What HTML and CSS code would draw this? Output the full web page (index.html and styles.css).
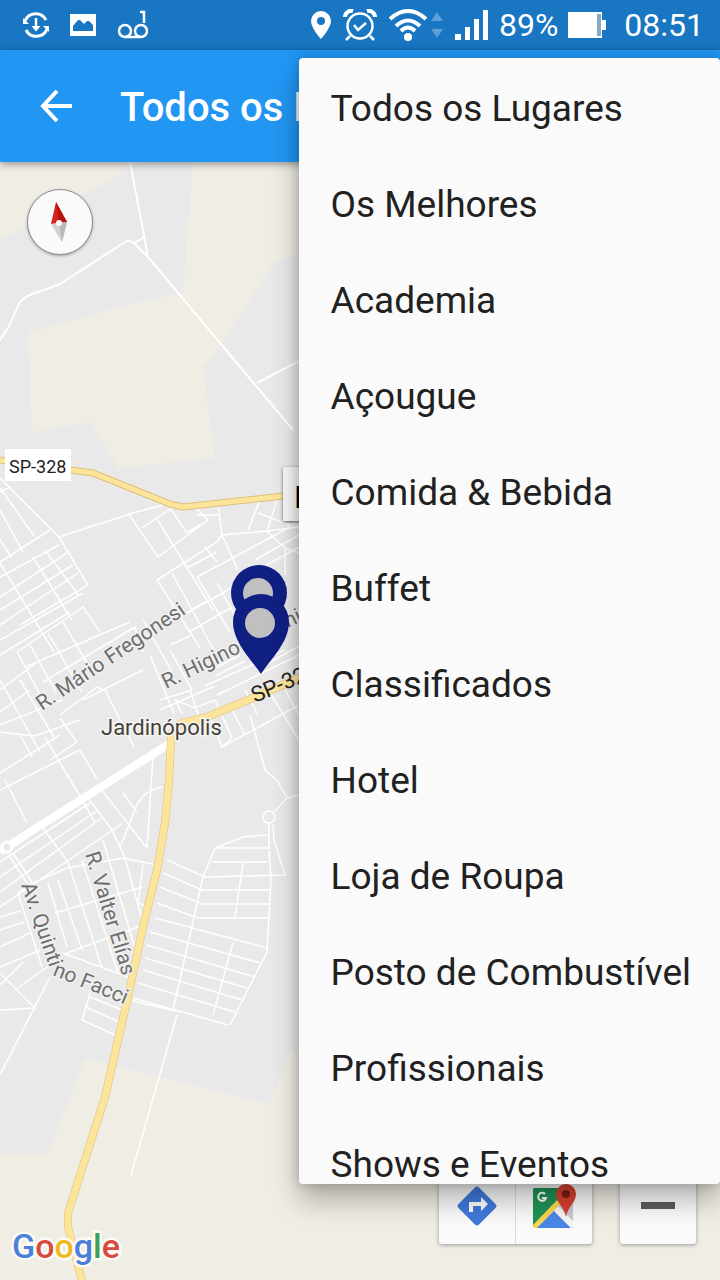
FILE: index.html
```html
<!DOCTYPE html>
<html lang="pt-BR">
<head>
  <meta charset="UTF-8">
  <meta name="viewport" content="width=device-width, initial-scale=1">
  <title>Todos os Lugares</title>
  <link rel="stylesheet" href="styles.css">
</head>
<body>

  <div class="status-bar">
    <div class="notificacoes">
      <svg width="26" height="26" viewBox="0 0 26 26" fill="none" stroke="#fff" stroke-width="3">
        <path d="M2 9A11.500 11.500 0 0 1 23 8M24 17A11.500 11.500 0 0 1 3 18"/>
        <path d="M13 6v9" stroke-width="2.500"/>
        <path d="M8.500 14h9L13 19.500zM0 6v6h6zM26 20v-6h-6z" fill="#fff" stroke="none"/>
      </svg>
      <svg width="26" height="22" viewBox="0 0 26 22">
        <path fill="#fff" fill-rule="evenodd" d="M0 0h26v22H0zM3 17h20v-6l-4-4h-2l-3 3-4-4H8l-5 6z"/>
      </svg>
      <svg width="32" height="30" viewBox="0 0 32 30" fill="none" stroke="#fff" stroke-width="2.500">
        <circle cx="8" cy="21" r="6"/>
        <circle cx="24" cy="21" r="6"/>
        <path d="M8 27h16M23 2h4v11"/>
      </svg>
    </div>
    <div class="sistema">
      <div class="indicadores">
        <svg width="20" height="28" viewBox="0 0 20 28">
          <path fill="#fff" fill-rule="evenodd" d="M10 0A10 10 0 0 0 0 10c0 7 10 18 10 18s10-11 10-18A10 10 0 0 0 10 0zm0 6a4 4 0 1 1 0 8 4 4 0 0 1 0-8z"/>
        </svg>
        <svg width="34" height="32" viewBox="0 0 34 32" fill="none" stroke="#fff" stroke-width="2.500">
          <circle cx="17" cy="17" r="12.500"/>
          <path d="M11 16l4 5 8-7M7 27l-4 4M27 27l4 4"/>
          <path d="M2 8c0-4 4-7 8-6M32 8c0-4-4-7-8-6" stroke-width="4"/>
        </svg>
        <svg width="54" height="32" viewBox="0 0 54 32" fill="none" stroke="#fff" stroke-width="4">
          <path d="M1 10Q19-6 37 10M7 17Q19 6 31 17M12 22Q19 15 26 22"/>
          <circle cx="19" cy="28" r="4" fill="#fff" stroke="none"/>
          <path d="M42 12h12l-6-9zM42 20h12l-6 9z" fill="#5c9fd6" stroke="none"/>
        </svg>
        <svg width="34" height="30" viewBox="0 0 34 30" fill="#fff">
          <path d="M0 24h6v6H0zM10 17h5v13h-5zM19 9h5v21h-5zM28 0h5v30h-5z"/>
        </svg>
      </div>
      <span>89%</span>
      <svg width="38" height="26" viewBox="0 0 38 26">
        <path fill="#fff" d="M0 0h34v8h4v10h-4v8H0z"/>
        <path fill="#86a9c4" d="M29 2h4v22h-4z"/>
      </svg>
      <span class="hora">08:51</span>
    </div>
  </div>

  <header class="barra">
    <button class="voltar" type="button" aria-label="Voltar">
      <svg width="32" height="32" viewBox="0 0 32 32" fill="none" stroke="#fff" stroke-width="4">
        <path d="M17 1L3 16l14 15M2 16h30"/>
      </svg>
    </button>
    <h1>Todos os Lugares</h1>
  </header>

  <main class="mapa">
    <svg class="ruas" viewBox="0 162 720 1118" preserveAspectRatio="xMinYMin slice">
      <rect x="0" y="162" width="720" height="1118" fill="#e9e9e9"/>

      <!-- areas rurais -->
      <g fill="#efede4">
        <path d="M0 162H140L88 193 20 230 0 240z"/>
        <path d="M193 162H720V255H299L287 257 273 263 227 337 203 367 215 458 118 468 90 422 32 432 28 333 133 303 183 293z"/>
        <path d="M0 1154H48L85 1058 270 1104 290 1050H720V1280H0z"/>
      </g>

      <!-- ruas pequenas -->
      <g fill="none" stroke="#fff" stroke-width="1.500">
        <path d="M0 478L59 537 88 585 20 625M59 537L133 513 163 505M128 513L158 557 208 520 195 507M142 528L172 508M157 519L213 610M170 508L187 533 200 525"/>
        <path d="M218 505L222 535 238 570M222 535L267 531 299 527M260 500L248 530M277 500L267 531 285 548 300 553M258 513L290 525M285 548V575M197 577L290 527M157 580L217 542 222 535M197 515H218"/>
        <path d="M157 580L200 648M172 573L222 665M205 547L217 562M197 577L230 632M217 583L240 625M180 617L233 587M187 568L217 552M189 632L232 607M180 617L205 602"/>
        <path d="M0 562L50 530M0 577L59 545M0 597L67 553M0 610L73 565M0 625L78 573M0 488L35 537M0 510L23 552M0 540L12 558M0 492L10 487M0 563L54 652M33 557L72 620M45 550L79 596"/>
        <path d="M0 640L83 593M0 655L70 612M17 652L83 607 100 632M17 652L43 700M25 667L130 622M30 645L56 692M48 633L82 692M63 622L88 665M43 682L135 627 143 652M0 690L40 660M0 712L30 690"/>
        <path d="M83 700L143 670M60 715L97 687 105 690 134 747M0 725L62 700M0 732L35 736 80 720M45 737L95 822M20 735L32 757M60 718L77 742 50 760M0 773L60 735M0 790L80 750 97 779M0 680L40 752M20 680L55 739"/>
        <path d="M143 620L172 672M160 700L192 690M170 645L190 636M150 655L174 714M160 710L215 686M190 690L200 720M205 686L285 650M212 670L240 655M215 700L232 738 222 747M217 695L299 655M215 676L245 661M209 714L222 747 299 705M250 715L265 770 277 780M232 710L245 735M270 693L299 740"/>
        <path d="M182 714L175 700 195 708 215 700M192 690L170 650M255 560L299 535M240 580L299 547M265 665L299 646M245 690L258 715M285 690L299 715"/>
        <path d="M0 862L90 803M0 877L98 810M0 892L103 817M0 907L123 823M33 883L67 868 123 858 157 865M0 917L20 911M0 930L25 922M55 913L142 887M0 947L30 933M67 953L143 925M0 967L40 950M63 953L128 977M5 780L27 823"/>
        <path d="M43 828L68 862 102 968M48 883L67 947M58 880L82 950M82 860L118 973M103 840L134 945M88 798L112 830 125 858 143 923M100 788L147 848 153 755M163 787Q140 790 133 815L120 847M143 865L138 903 147 906M123 793L137 812"/>
        <path d="M13 853L32 882 18 893 42 967M10 857L27 883M0 985L23 962M0 973L35 1008 0 1010M15 990L50 965M50 977L0 1075M90 993L82 1020 115 1035M86 1007L119 1022M90 997L122 1010"/>
        <path d="M167 860L205 877M163 873L202 890M160 887L200 903M157 903L198 918M155 918L267 948M150 932L260 963M147 945L255 977M145 958L247 988M143 970L242 1000M138 983L235 1012M133 998L228 1025M133 1001L180 1012"/>
        <path d="M215 848L203 877 173 1010M215 848H269V824M215 848L243 837 267 835M269 850L271 880 267 952 230 1025M273 824L274 840 285 875 203 877M212 862H267M202 890H271M200 904H270M198 918H270M243 863L235 917M233 943L213 1015M277 780L287 798 299 795M287 798L274 812"/>
        <path d="M177 1015L131 1175"/>
        <circle cx="269" cy="817" r="6"/>
      </g>
      <g fill="none" stroke="#fff" stroke-width="2">
        <path d="M130 162L148 257M0 340L8 328 20 302 27 296 60 284 125 242Q130 239 135 244L148 257 293 430M135 242Q144 240 144 233M257 383L299 361"/>
      </g>
      <path d="M172 742L8 846 0 852" fill="none" stroke="#fff" stroke-width="8"/>
      <circle cx="7" cy="847" r="5" fill="#e9e9e9" stroke="#fff" stroke-width="3"/>

      <!-- rodovias -->
      <g fill="none" stroke-linejoin="round">
        <g stroke="#dcc07a" stroke-width="7">
          <path d="M0 460L70 470 93 473 170 504 183 507 310 493"/>
          <path d="M310 673L253 698 207 717 187 722Q172 724 171 740L169 780 165 823 157 870 143 927 128 997 118 1040 105 1097 68 1213V1227L83 1285" stroke-width="8"/>
        </g>
        <g stroke="#fde49b" stroke-width="5">
          <path d="M0 460L70 470 93 473 170 504 183 507 310 493"/>
          <path d="M310 673L253 698 207 717 187 722Q172 724 171 740L169 780 165 823 157 870 143 927 128 997 118 1040 105 1097 68 1213V1227L83 1285" stroke-width="7"/>
        </g>
      </g>

      <!-- nomes -->
      <g class="nome-rua">
        <text transform="translate(42 711) rotate(-34)">R. Mário Fregonesi</text>
        <text transform="translate(166 689) rotate(-26)">R. Higino</text>
        <text transform="translate(288 628) rotate(-26)">ni</text>
        <text transform="translate(85 854) rotate(73)">R. Valter Elías</text>
        <text transform="translate(21 885) rotate(71)">Av. Quinti</text>
        <text transform="translate(52 975) rotate(22)">no Facci</text>
      </g>
      <text class="rodovia" transform="translate(255 703) rotate(-23)">SP-328</text>
      <text class="cidade" x="101" y="735">Jardinópolis</text>
      <rect x="5" y="449" width="66" height="32" fill="#fff"/>
      <text class="placa" x="9" y="473">SP-328</text>

      <!-- marcadores -->
      <g fill="#101f82">
        <circle cx="259" cy="593" r="28"/>
        <circle cx="258" cy="593" r="15" fill="#c0c0c0"/>
        <path d="M261 594a28 28 0 0 0-28 28c0 20 18 37 28 52 10-15 28-32 28-52a28 28 0 0 0-28-28z"/>
        <circle cx="260" cy="623" r="15" fill="#c0c0c0"/>
      </g>
    </svg>

    <button class="bussola" type="button" aria-label="Norte">
      <svg width="20" height="40" viewBox="0 0 20 40">
        <path fill="#d8201e" d="M6 0l11 20-8 1-8 1z"/>
        <path fill="#b5140f" d="M6 0l11 20-8 1z"/>
        <path fill="#d2d2d2" d="M1 22l16-2-5 20z"/>
        <path fill="#b9b9b9" d="M9 21l8-1-5 20z"/>
        <circle cx="9" cy="21" r="3" fill="#fff"/>
      </svg>
    </button>

    <div class="balao">L</div>

    <div class="google"><span class="azul">G</span><span class="vermelho">o</span><span class="amarelo">o</span><span class="azul">g</span><span class="verde">l</span><span class="vermelho">e</span></div>

    <div class="controles">
      <div class="grupo">
        <button type="button" aria-label="Rotas">
          <svg width="40" height="40" viewBox="0 0 40 40">
            <path fill="#4079db" d="M18 1.500q2-2 4 0L38.500 18q2 2 0 4L22 38.500q-2 2-4 0L1.500 22q-2-2 0-4z"/>
            <path fill="#fff" d="M12 26V16h12v-5l7 7-7 7v-5h-8v6z"/>
          </svg>
        </button>
        <button type="button" aria-label="Google Maps">
          <svg width="44" height="44" viewBox="0 0 44 44">
            <rect x="1" y="4" width="40" height="40" rx="2" fill="#c9c9cf"/>
            <path fill="#1f9254" d="M3 4h30L22 24 1 42V6q0-2 2-2z"/>
            <path fill="#fbd74b" d="M25 16l3 4L5 44H2l-1-3z"/>
            <path fill="#4a86e8" d="M22 27L39 44H5z"/>
            <path fill="#f5f5f5" d="M22 27l4-5 15 15v5l-2 2z"/>
            <path fill="none" stroke="#fff" stroke-width="2" d="M13 10a4 4 0 1 0 1 4h-4"/>
            <path fill="#d6402f" d="M34 0a10 10 0 0 0-10 10c0 9 8 12 10 23 2-11 10-14 10-23A10 10 0 0 0 34 0z"/>
            <circle cx="34" cy="10" r="4" fill="#7d1a17"/>
          </svg>
        </button>
      </div>
      <div class="grupo">
        <button type="button" aria-label="Diminuir zoom">
          <svg width="34" height="8"><rect width="34" height="7" fill="#5c5c5c"/></svg>
        </button>
      </div>
    </div>
  </main>

  <ul class="menu" role="menu">
    <li><button type="button" role="menuitem">Todos os Lugares</button></li>
    <li><button type="button" role="menuitem">Os Melhores</button></li>
    <li><button type="button" role="menuitem">Academia</button></li>
    <li><button type="button" role="menuitem">Açougue</button></li>
    <li><button type="button" role="menuitem">Comida &amp; Bebida</button></li>
    <li><button type="button" role="menuitem">Buffet</button></li>
    <li><button type="button" role="menuitem">Classificados</button></li>
    <li><button type="button" role="menuitem">Hotel</button></li>
    <li><button type="button" role="menuitem">Loja de Roupa</button></li>
    <li><button type="button" role="menuitem">Posto de Combustível</button></li>
    <li><button type="button" role="menuitem">Profissionais</button></li>
    <li><button type="button" role="menuitem">Shows e Eventos</button></li>
  </ul>

</body>
</html>
```
FILE: styles.css
```css
* {
  box-sizing: border-box;
}
body {
  margin: 0;
  min-height: 100vh;
  display: flex;
  flex-direction: column;
  position: relative;
  overflow: hidden;
  font-family: Roboto, "Liberation Sans", sans-serif;
}
button {
  display: flex;
  align-items: center;
  justify-content: center;
  padding: 0;
  border: none;
  background: none;
  font: inherit;
  cursor: pointer;
}
svg {
  display: block;
  flex: none;
}

/* barra de status */
.status-bar {
  display: flex;
  align-items: center;
  justify-content: space-between;
  height: 50px;
  padding: 0 16px 0 23px;
  background-color: #1976c2;
  color: #fff;
  font-size: 32px;
}
.notificacoes {
  display: flex;
  align-items: center;
  gap: 21px;
}
.sistema {
  display: flex;
  align-items: center;
  gap: 10px;
}
.indicadores {
  display: flex;
  align-items: center;
  gap: 12px;
}
.sistema span {
  line-height: 50px;
}
.hora {
  margin-left: 8px;
}

.barra {
  display: flex;
  align-items: center;
  height: 112px;
  padding: 0 40px;
  gap: 48px;
  background-color: #2196f3;
  box-shadow: 0 2px 8px rgba(0, 0, 0, 0.4);
  color: #fff;
  z-index: 1;
}
.barra h1 {
  margin: 0;
  padding-top: 4px;
  font-size: 40px;
  font-weight: 500;
  line-height: 48px;
  white-space: nowrap;
}

/* mapa */
.mapa {
  flex: 1;
  position: relative;
  background-color: #efede4;
}
.ruas {
  position: absolute;
  width: 100%;
  height: 100%;
}
.nome-rua {
  font-size: 21px;
  fill: #6e6e6e;
  stroke: #f0f0f0;
  stroke-width: 3px;
  paint-order: stroke;
}
.rodovia {
  font-size: 22px;
  fill: #222;
}
.cidade {
  font-size: 22px;
  fill: #443f38;
  stroke: #f4f4f4;
  stroke-width: 3px;
  paint-order: stroke;
}
.placa {
  font-size: 18px;
  fill: #222;
}
.bussola {
  position: absolute;
  top: 27px;
  left: 27px;
  width: 66px;
  height: 66px;
  border: 1px solid #8c8c8c;
  border-radius: 50%;
  background-color: #fafafa;
  box-shadow: 0 1px 3px rgba(0, 0, 0, 0.3);
}
.balao {
  position: absolute;
  top: 305px;
  left: 283px;
  width: 120px;
  height: 54px;
  padding-left: 11px;
  background-color: #f7f7f7;
  box-shadow: 0 1px 3px rgba(0, 0, 0, 0.6);
  color: #000;
  font-size: 32px;
  line-height: 60px;
}
.google {
  position: absolute;
  left: 12px;
  bottom: 12px;
  font-size: 34px;
  font-weight: 500;
  line-height: 44px;
  -webkit-text-stroke: 5px #fbfaf5;
  paint-order: stroke;
}
.azul {
  color: #4a80d9;
}
.vermelho {
  color: #d64b40;
}
.amarelo {
  color: #f0b91f;
}
.verde {
  color: #3fa158;
}
.controles {
  position: absolute;
  right: 24px;
  bottom: 36px;
  display: flex;
  gap: 28px;
}
.grupo {
  display: flex;
  border-radius: 3px;
  background-color: #fafafa;
  box-shadow: 0 1px 4px rgba(0, 0, 0, 0.35);
}
.grupo button {
  width: 76px;
  height: 76px;
}
.grupo button + button {
  width: 77px;
  border-left: 1px solid #dcdcdc;
}

/* menu de categorias */
.menu {
  position: absolute;
  top: 58px;
  right: 0;
  bottom: 96px;
  z-index: 2;
  margin: 0;
  padding: 2px 0 0;
  list-style: none;
  overflow: hidden;
  border-radius: 4px;
  background-color: #fafafa;
  box-shadow: 0 16px 28px rgba(0, 0, 0, 0.28), 0 0 12px rgba(0, 0, 0, 0.2);
}
.menu button {
  justify-content: flex-start;
  width: 100%;
  height: 96px;
  padding: 0 29px 0 32px;
  color: #212121;
  font-size: 37px;
  white-space: nowrap;
}
```
